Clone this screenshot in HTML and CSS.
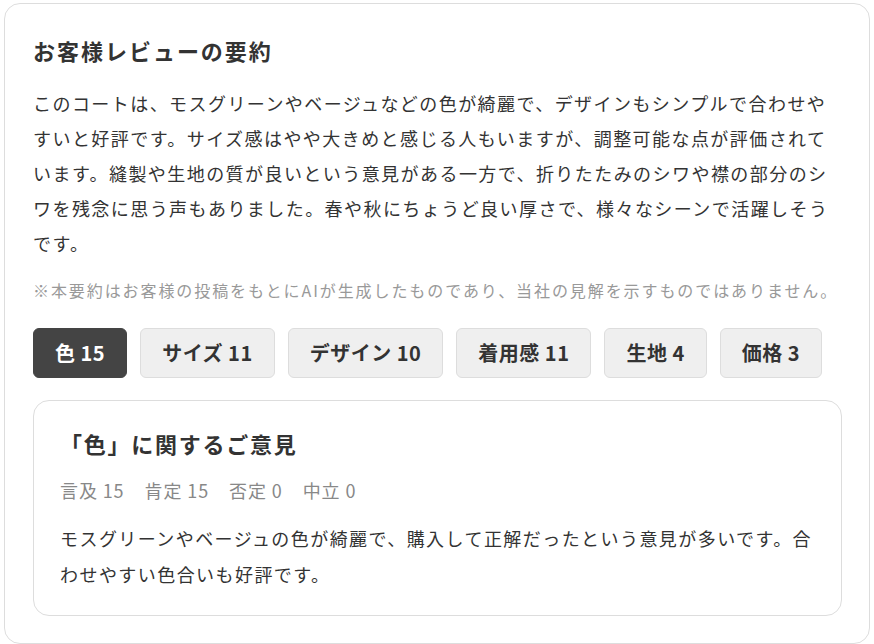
FILE: index.html
```html
<!DOCTYPE html>
<html>
    <head>
        <meta charset="utf-8">
        <title>お客様レビューの要約</title>
        <link rel="stylesheet" href="styles.css">
    </head>
    <body>
        <div class="summary">
            <h2 class="summary-title">お客様レビューの要約</h2>
            <p class="summary-text">このコートは、モスグリーンやベージュなどの色が綺麗で、デザインもシンプルで合わせやすいと好評です。サイズ感はやや大きめと感じる人もいますが、調整可能な点が評価されています。縫製や生地の質が良いという意見がある一方で、折りたたみのシワや襟の部分のシワを残念に思う声もありました。春や秋にちょうど良い厚さで、様々なシーンで活躍しそうです。</p>
            <p class="note">※本要約はお客様の投稿をもとにAIが生成したものであり、当社の見解を示すものではありません。</p>

            <div class="tabs">
                <button class="tab active" type="button">色 15</button>
                <button class="tab" type="button">サイズ 11</button>
                <button class="tab" type="button">デザイン 10</button>
                <button class="tab" type="button">着用感 11</button>
                <button class="tab" type="button">生地 4</button>
                <button class="tab" type="button">価格 3</button>
            </div>

            <div class="opinion">
                <h3 class="opinion-title">「色」に関するご意見</h3>
                <div class="counts">
                    <span>言及 15</span>
                    <span>肯定 15</span>
                    <span>否定 0</span>
                    <span>中立 0</span>
                </div>
                <p class="opinion-text">モスグリーンやベージュの色が綺麗で、購入して正解だったという意見が多いです。合わせやすい色合いも好評です。</p>
            </div>
        </div>
    </body>
</html>
```

FILE: styles.css
```css
body { margin: 3px 4px; font-family: "Noto Sans CJK JP", "Noto Sans", sans-serif; color: #333; background: #fff; }

.summary { border: 1px solid #ddd; border-radius: 16px; padding: 30px 27px 27px 28px; }
.summary-title { margin: 0; font-size: 22px; line-height: 32px; font-weight: bold; letter-spacing: 0.09em; }
.summary-text { margin: 20px 0 0; font-size: 18px; line-height: 35px; letter-spacing: 0.08em; }
.note { margin: 16px 0 0; font-size: 16px; line-height: 26px; color: #999; letter-spacing: 0.12em; }

.tabs { display: flex; gap: 13px; margin-top: 25px; }
.tab { font-family: inherit; font-size: 20px; font-weight: bold; line-height: 30px; color: #333; background: #efefef; border: 1px solid #ddd; border-radius: 6px; padding: 9px 21px; letter-spacing: 0.025em; }
.tab.active { background: #444; border-color: #444; color: #fff; }

.opinion { margin-top: 22px; border: 1px solid #ddd; border-radius: 16px; padding: 26px 26px 23px 26px; }
.opinion-title { margin: 0; font-size: 22px; line-height: 32px; font-weight: bold; letter-spacing: 0.08em; }
.counts { display: flex; gap: 20px; margin-top: 16px; font-size: 18px; line-height: 30px; color: #888; letter-spacing: 0.05em; }
.opinion-text { margin: 15px 0 0; font-size: 18px; line-height: 36px; letter-spacing: 0.08em; }
```
